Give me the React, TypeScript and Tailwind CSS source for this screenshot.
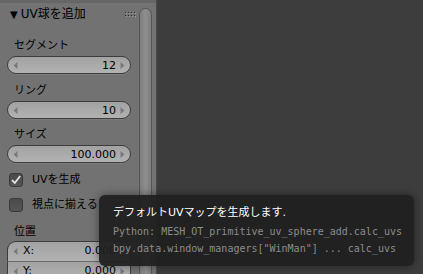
import React from "react";

const uiFont = { fontFamily: '"DejaVu Sans", "Noto Sans CJK JP", sans-serif' };
const monoFont = { fontFamily: '"DejaVu Sans Mono", "Liberation Mono", monospace' };

function ArrowLeft() {
  return (
    <svg width="5" height="7" viewBox="0 0 5 7" className="shrink-0">
      <path d="M4.5 0 L0.5 3.5 L4.5 7 Z" fill="#7a7a7a" />
    </svg>
  );
}

function ArrowRight() {
  return (
    <svg width="5" height="7" viewBox="0 0 5 7" className="shrink-0">
      <path d="M0.5 0 L4.5 3.5 L0.5 7 Z" fill="#7a7a7a" />
    </svg>
  );
}

function NumField({ value }: { value: string }) {
  return (
    <div className="mt-[2px] flex h-[18px] w-[124px] shrink-0 items-center rounded-full border border-[#3c3c3c] bg-gradient-to-b from-[#a2a2a2] to-[#b2b2b2] px-[5px] text-[11px] text-black shadow-[0_1px_0_rgba(255,255,255,0.08)]">
      <ArrowLeft />
      <span className="flex-1 pr-[4px] text-right leading-none">{value}</span>
      <ArrowRight />
    </div>
  );
}

function Label({ text, className }: { text: string; className: string }) {
  return (
    <div className={`flex h-[16px] shrink-0 items-center pl-[7px] text-[11px] text-black ${className}`}>
      {text}
    </div>
  );
}

function CheckRow({ text, checked, className }: { text: string; checked: boolean; className: string }) {
  return (
    <div className={`flex h-[18px] shrink-0 items-center gap-[9px] pl-[2px] text-[11px] text-black ${className}`}>
      <div className="flex h-[14px] w-[14px] items-center justify-center rounded-[3px] border border-[#3a3a3a] bg-gradient-to-b from-[#4a4a4a] to-[#555555]">
        {checked && (
          <svg width="12" height="12" viewBox="0 0 12 12">
            <path d="M2 6.2 L4.8 9 L10.2 2" stroke="#e6e6e6" strokeWidth="1.8" fill="none" />
          </svg>
        )}
      </div>
      <span>{text}</span>
    </div>
  );
}

function Grip() {
  return (
    <svg width="11" height="5" viewBox="0 0 11 5">
      {[0, 3, 6, 9].map((x) => (
        <g key={x}>
          <rect x={x} y={0} width="1" height="1" fill="#2a2a2a" />
          <rect x={x + 1} y={1} width="1" height="1" fill="#a0a0a0" />
          <rect x={x} y={3} width="1" height="1" fill="#2a2a2a" />
          <rect x={x + 1} y={4} width="1" height="1" fill="#a0a0a0" />
        </g>
      ))}
    </svg>
  );
}

function VecField({ axis, first }: { axis: string; first: boolean }) {
  return (
    <div
      className={`flex h-[20px] w-[124px] shrink-0 items-center border-x border-[#3c3c3c] bg-gradient-to-b from-[#a2a2a2] to-[#b2b2b2] px-[5px] text-[11px] text-black ${
        first ? "rounded-t-[9px] border-t" : "border-t border-t-[#6a6a6a]"
      }`}
    >
      <ArrowLeft />
      <span className="ml-[5px]">{axis}</span>
      <span className="flex-1 pr-[4px] text-right">0.000</span>
      <ArrowRight />
    </div>
  );
}

export default function App() {
  return (
    <div className="relative flex h-[274px] w-[423px] overflow-hidden bg-[#3d3d3d]" style={uiFont}>
      {/* tool panel */}
      <div className="flex h-full w-[157px] shrink-0 flex-col overflow-hidden border-r border-[#4a4a4a] bg-[#727272]">
        <div className="h-[3px] shrink-0 bg-[#666666]" />
        <div className="flex min-h-0 flex-1">
          <div className="flex w-[139px] flex-col pl-[7px]">
            <div className="flex h-[22px] shrink-0 items-center justify-between pl-[3px] pr-[3px] text-[12px] text-black">
              <span className="flex items-center gap-[3px]">
                <span className="text-[10px]">▼</span>
                <span>UV球を追加</span>
              </span>
              <Grip />
            </div>

            <Label text="セグメント" className="mt-[13px]" />
            <NumField value="12" />

            <Label text="リング" className="mt-[9px]" />
            <NumField value="10" />

            <Label text="サイズ" className="mt-[8px]" />
            <NumField value="100.000" />

            <CheckRow text="UVを生成" checked className="mt-[8px]" />
            <CheckRow text="視点に揃える" checked={false} className="mt-[7px]" />

            <Label text="位置" className="mt-[10px]" />
            <div className="mt-[1px] flex shrink-0 flex-col">
              <VecField axis="X:" first />
              <VecField axis="Y:" first={false} />
            </div>
          </div>

          {/* scrollbar */}
          <div className="pt-[5px]">
            <div className="h-[300px] w-[13px] rounded-t-full border border-[#555555] bg-gradient-to-r from-[#7e7e7e] via-[#8e8e8e] to-[#7e7e7e]" />
          </div>
        </div>
      </div>

      {/* tooltip */}
      <div className="absolute left-[99px] top-[195px] flex h-[71px] w-[315px] flex-col rounded-[6px] bg-[#202020]/95 pl-[14px] pt-[10px] shadow-[0_0_8px_rgba(0,0,0,0.45)]">
        <div className="flex h-[16px] items-center text-[11px] text-white">デフォルトUVマップを生成します.</div>
        <div className="mt-[2px] flex h-[17px] items-center text-[10px] text-[#8c8c8c]" style={monoFont}>
          Python: MESH_OT_primitive_uv_sphere_add.calc_uvs
        </div>
        <div className="flex h-[17px] items-center text-[10px] text-[#8c8c8c]" style={monoFont}>
          bpy.data.window_managers["WinMan"] ... calc_uvs
        </div>
      </div>
    </div>
  );
}
